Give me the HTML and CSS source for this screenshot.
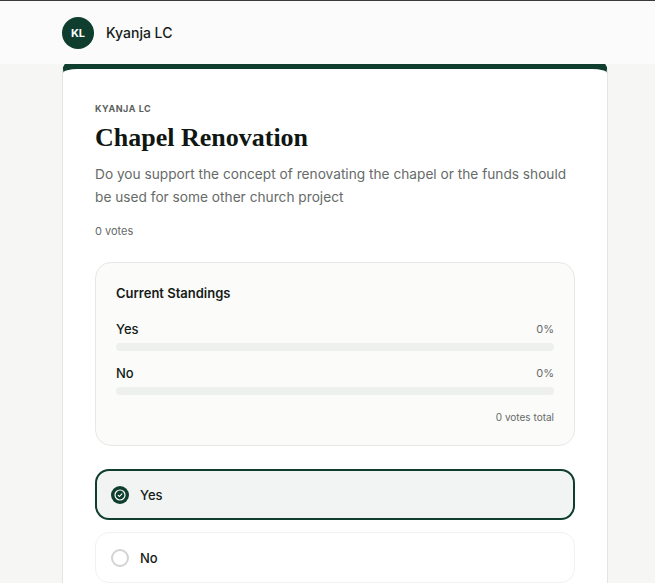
FILE: index.html
```html
<!DOCTYPE html>
<html lang="en">
<head>
    <meta charset="UTF-8">
    <meta name="viewport" content="width=device-width, initial-scale=1.0">
    <title>Chapel Renovation</title>
    <link rel="stylesheet" href="styles.css">
</head>
<body>

<!-- Top bar -->
<header class="top-bar">
    <div class="top-bar-inner">
        <div class="avatar">KL</div>
        <span class="org-name">Kyanja LC</span>
    </div>
</header>

<main class="page">
    <div class="poll-card">
        <p class="poll-org">KYANJA LC</p>
        <h1 class="poll-title">Chapel Renovation</h1>
        <p class="poll-desc">Do you support the concept of renovating the chapel or the funds should be used for some other church project</p>
        <p class="poll-count">0 votes</p>

        <!-- Current standings -->
        <section class="standings">
            <h2>Current Standings</h2>
            <div class="standing-row">
                <div class="standing-head">
                    <span class="standing-label">Yes</span>
                    <span class="standing-pct">0%</span>
                </div>
                <div class="bar"><div class="bar-fill" style="width: 0%"></div></div>
            </div>
            <div class="standing-row">
                <div class="standing-head">
                    <span class="standing-label">No</span>
                    <span class="standing-pct">0%</span>
                </div>
                <div class="bar"><div class="bar-fill" style="width: 0%"></div></div>
            </div>
            <p class="standings-total">0 votes total</p>
        </section>

        <!-- Options -->
        <div class="options">
            <label class="option selected">
                <svg class="radio" width="18" height="18" viewBox="0 0 18 18">
                    <circle cx="9" cy="9" r="9" fill="#0f3d2e"/>
                    <circle cx="9" cy="9" r="5" fill="none" stroke="#fff" stroke-width="1.2"/>
                    <path d="M7.2 9.3 L8.5 10.5 L10.9 7.8" fill="none" stroke="#fff" stroke-width="1.1" stroke-linecap="round" stroke-linejoin="round"/>
                </svg>
                <span>Yes</span>
            </label>
            <label class="option">
                <span class="radio-empty"></span>
                <span>No</span>
            </label>
        </div>
    </div>
</main>

</body>
</html>
```

FILE: styles.css
```css
body {
    margin: 0;
    font-family: Inter, "Noto Sans", sans-serif;
    background-color: #f6f7f5;
    color: #161b18;
}

/* Top bar - sits over the page as it scrolls */
.top-bar {
    position: fixed;
    top: 0;
    left: 0;
    right: 0;
    height: 63px;
    background-color: #fafbfa;
    border-top: 1px solid #3a3a3a;
    z-index: 10;
}

.top-bar-inner {
    display: flex;
    align-items: center;
    gap: 12px;
    height: 100%;
    padding-left: 62px;
}

.avatar {
    width: 32px;
    height: 32px;
    border-radius: 50%;
    background-color: #0f3d2e;
    color: #fff;
    font-size: 11px;
    font-weight: 700;
    display: flex;
    align-items: center;
    justify-content: center;
}

.org-name {
    font-size: 14px;
    font-weight: 500;
}

.page {
    padding: 57px 48px 40px 62px;
}

.poll-card {
    width: 480px;
    background-color: #fff;
    border: 1px solid #e2e5e2;
    border-top: 12px solid #0f3d2e;
    border-radius: 16px;
    padding: 34px 32px 32px 32px;
}

.poll-org {
    margin: 0;
    font-size: 9px;
    font-weight: 700;
    letter-spacing: 0.06em;
    color: #5a5f5c;
}

.poll-title {
    margin: 7px 0 0 0;
    font-family: "Liberation Serif", "DejaVu Serif", serif;
    font-size: 26px;
    font-weight: 700;
    line-height: 34px;
    color: #101612;
}

.poll-desc {
    margin: 8px 0 0 0;
    font-size: 13.7px;
    line-height: 23px;
    color: #666b68;
}

.poll-count {
    margin: 15px 0 0 0;
    font-size: 11px;
    color: #666b68;
}

.standings {
    margin-top: 24px;
    background-color: #fbfbfa;
    border: 1px solid #e6e8e6;
    border-radius: 16px;
    padding: 22px 20px 22px 20px;
}

.standings h2 {
    margin: 0 0 20px 0;
    font-size: 13px;
    font-weight: 600;
}

.standing-row {
    margin-bottom: 14px;
}

.standing-head {
    display: flex;
    justify-content: space-between;
    align-items: center;
    margin-bottom: 6px;
}

.standing-label {
    font-size: 13px;
    font-weight: 500;
}

.standing-pct {
    font-size: 11px;
    color: #666b68;
}

.bar {
    height: 8px;
    border-radius: 4px;
    background-color: #eef0ee;
    overflow: hidden;
}

.bar-fill {
    height: 100%;
    background-color: #0f3d2e;
}

.standings-total {
    margin: 16px 0 0 0;
    font-size: 10px;
    color: #666b68;
    text-align: right;
}

.options {
    margin-top: 23px;
    display: flex;
    flex-direction: column;
    gap: 12px;
}

.option {
    display: flex;
    align-items: center;
    gap: 11px;
    height: 51px;
    padding: 0 15px;
    border: 1px solid #f0f1f0;
    border-radius: 14px;
    background-color: #fff;
    font-size: 13px;
    font-weight: 500;
    box-sizing: border-box;
    cursor: pointer;
}

.option.selected {
    border: 2px solid #0f3d2e;
    background-color: #f1f4f2;
    padding: 0 14px;
}

.radio-empty {
    width: 14px;
    height: 14px;
    border: 2px solid #d2d4d2;
    border-radius: 50%;
}
```
